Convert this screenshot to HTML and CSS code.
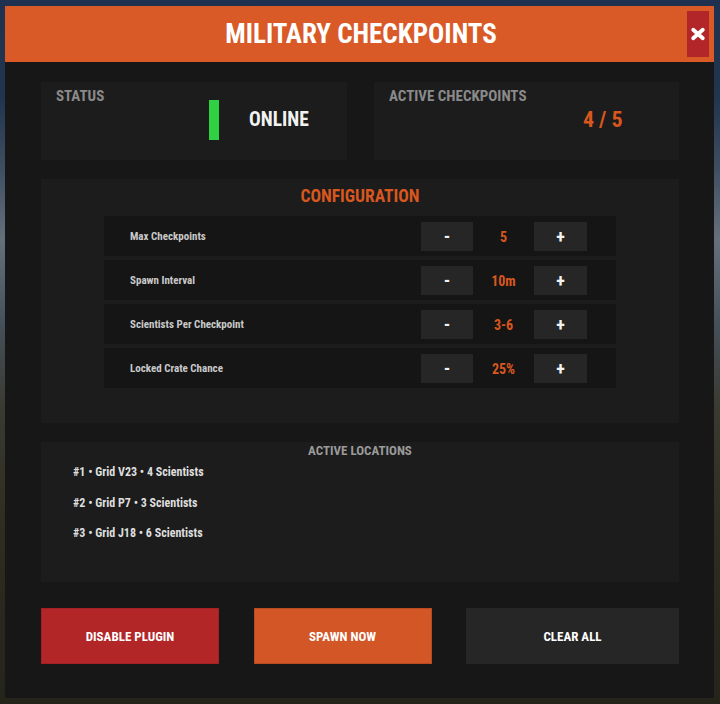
FILE: index.html
```html
<!DOCTYPE html>
<html lang="en">
<head>
<meta charset="utf-8">
<title>Military Checkpoints</title>
<link rel="stylesheet" href="styles.css">
</head>
<body>
<div class="panel">
  <header class="header">
    <h1 class="title">MILITARY CHECKPOINTS</h1>
    <button class="close" aria-label="Close">
      <svg width="16" height="14" viewBox="0 0 16 14"><path d="M3.2 2.8 L12.8 11.2 M12.8 2.8 L3.2 11.2" stroke="#fff" stroke-width="3.8" stroke-linecap="round" fill="none"/></svg>
    </button>
  </header>
  <main class="content">
    <div class="stats">
      <div class="card stat">
        <div class="stat-label">STATUS</div>
        <div class="stat-value status-value"><span class="status-bar"></span><span class="online">ONLINE</span></div>
      </div>
      <div class="card stat">
        <div class="stat-label">ACTIVE CHECKPOINTS</div>
        <div class="stat-value count">4 / 5</div>
      </div>
    </div>

    <section class="card config">
      <h2 class="config-title">CONFIGURATION</h2>
      <div class="rows">
        <div class="row"><span class="row-label">Max Checkpoints</span><div class="stepper"><button class="step minus">-</button><span class="step-value">5</span><button class="step plus">+</button></div></div>
        <div class="row"><span class="row-label">Spawn Interval</span><div class="stepper"><button class="step minus">-</button><span class="step-value">10m</span><button class="step plus">+</button></div></div>
        <div class="row"><span class="row-label">Scientists Per Checkpoint</span><div class="stepper"><button class="step minus">-</button><span class="step-value">3-6</span><button class="step plus">+</button></div></div>
        <div class="row"><span class="row-label">Locked Crate Chance</span><div class="stepper"><button class="step minus">-</button><span class="step-value">25%</span><button class="step plus">+</button></div></div>
      </div>
    </section>

    <section class="card locations">
      <h3 class="loc-title">ACTIVE LOCATIONS</h3>
      <ul class="loc-list">
        <li>#1 • Grid V23 • 4 Scientists</li>
        <li>#2 • Grid P7 • 3 Scientists</li>
        <li>#3 • Grid J18 • 6 Scientists</li>
      </ul>
    </section>

    <div class="actions">
      <button class="action disable">DISABLE PLUGIN</button>
      <button class="action spawn">SPAWN NOW</button>
      <button class="action clear">CLEAR ALL</button>
    </div>
  </main>
</div>
</body>
</html>
```

FILE: styles.css
```css
* { box-sizing: border-box; }

html, body {
  margin: 0;
  padding: 0;
}

body {
  width: 720px;
  height: 704px;
  overflow: hidden;
  background: linear-gradient(180deg, #1e3150 0%, #22354f 14%, #3f4f62 24%, #66707c 34%, #45505a 46%, #3a3a30 58%, #2f2c20 75%, #25241b 100%);
  font-family: "Roboto Condensed", "Roboto", "Liberation Sans", sans-serif;
  font-stretch: condensed;
  font-weight: 700;
  color: #fff;
  padding: 6px 6px 0 5px;
}

button {
  font: inherit;
  border: 0;
  padding: 0;
  margin: 0;
  color: inherit;
  cursor: pointer;
}

.panel {
  width: 709px;
  height: 692px;
  background: #171717;
  display: flex;
  flex-direction: column;
}

.header {
  height: 56px;
  background: #d95a27;
  display: grid;
  grid-template-columns: 1fr auto 1fr;
  align-items: center;
  padding: 5px 5px;
}

.title {
  grid-column: 2;
  margin: 0;
  font-size: 27px;
  line-height: 46px;
  font-weight: 700;
  color: #fff;
  padding-left: 3px;
}

.close {
  grid-column: 3;
  justify-self: end;
  width: 22px;
  height: 46px;
  background: #b2262a;
  display: flex;
  align-items: center;
  justify-content: center;
}

.close svg { display: block; }

.content {
  padding: 20px 35px 0 36px;
  display: flex;
  flex-direction: column;
}

.card {
  background: #1c1c1c;
}

.stats {
  display: grid;
  grid-template-columns: 306px 305px;
  column-gap: 27px;
}

.stat {
  height: 78px;
  display: grid;
  grid-template-columns: 1fr 1fr;
}

.stat-label {
  align-self: start;
  padding: 6px 0 0 15px;
  font-size: 15px;
  line-height: 17px;
  color: #8a8a8a;
  white-space: nowrap;
}

.stat-value {
  align-self: center;
  padding-bottom: 2px;
}

.status-value {
  display: flex;
  align-items: center;
  gap: 30px;
  padding-left: 15px;
}

.status-bar {
  width: 10px;
  height: 40px;
  background: #2fd143;
}

.online {
  font-size: 19.5px;
  line-height: 24px;
  color: #f2f2f2;
}

.count {
  justify-self: center;
  font-size: 22px;
  line-height: 24px;
  color: #d8571f;
}

.config {
  margin-top: 19px;
  height: 244px;
  padding-top: 7px;
}

.config-title {
  margin: 0;
  text-align: center;
  font-size: 17.5px;
  line-height: 20px;
  font-weight: 700;
  color: #d8571f;
}

.rows {
  width: 512px;
  margin: 10px auto 0;
  display: flex;
  flex-direction: column;
  gap: 4px;
}

.row {
  height: 40px;
  background: #151515;
  display: flex;
  align-items: center;
  padding: 0 29px 0 26px;
}

.row-label {
  flex: 1;
  font-size: 11px;
  color: #c9c9c9;
}

.stepper {
  display: flex;
  align-items: center;
  margin-top: 1px;
}

.step {
  height: 29px;
  background: #262626;
  color: #f2f2f2;
  font-size: 18px;
  line-height: 29px;
  text-align: center;
}

.minus { width: 52px; }
.plus { width: 53px; }

.step-value {
  width: 61px;
  text-align: center;
  font-size: 14px;
  color: #d8571f;
}

.locations {
  margin-top: 19px;
  height: 140px;
  padding: 2px 32px 0;
}

.loc-title {
  margin: 0;
  text-align: center;
  font-size: 13px;
  line-height: 14px;
  font-weight: 700;
  color: #9a9a9a;
}

.loc-list {
  list-style: none;
  margin: 7px 0 0;
  padding: 0;
  display: flex;
  flex-direction: column;
  gap: 16.5px;
}

.loc-list li {
  font-size: 12px;
  line-height: 14px;
  color: #dedede;
}

.actions {
  margin-top: 26px;
  display: grid;
  grid-template-columns: 178px 178px 1fr;
  column-gap: 34.5px;
}

.action {
  height: 56px;
  font-size: 13px;
  color: #fff;
  text-align: center;
}

.disable {
  background: #b22628;
  border: 1px solid #a52024;
}

.spawn {
  background: #d35627;
  border: 1px solid #b84a1f;
}

.clear {
  background: #262626;
}
```
